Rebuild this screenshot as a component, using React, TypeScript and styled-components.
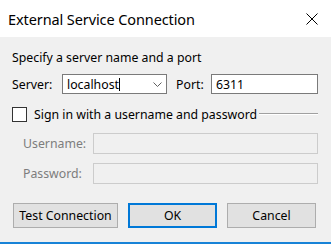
import React from "react";
import styled, { createGlobalStyle } from "styled-components";

const GlobalStyle = createGlobalStyle`
  html, body {
    margin: 0;
    padding: 0;
    background: #f0f0f0;
  }
  body {
    font-family: "Noto Sans", "Open Sans", sans-serif;
  }
`;

const Window = styled.div`
  width: 331px;
  height: 244px;
  display: flex;
  flex-direction: column;
  background: #f0f0f0;
  border-bottom: 2px solid #1883d7;
  box-sizing: border-box;
  overflow: hidden;
`;

const TitleBar = styled.div`
  height: 37px;
  flex: none;
  background: #fff;
  display: flex;
  align-items: center;
  justify-content: space-between;
  padding: 0 13px 0 8px;
`;

const Title = styled.span`
  font-size: 14.5px;
  color: #000;
  letter-spacing: -0.1px;
`;

const Body = styled.div`
  padding: 13px 13px 0 12px;
  display: flex;
  flex-direction: column;
  font-size: 12.3px;
  color: #000;
`;

const Heading = styled.div`
  height: 16px;
  line-height: 16px;
`;

const ServerRow = styled.div`
  margin-top: 8px;
  height: 20px;
  display: flex;
  align-items: center;
`;

const Label = styled.span<{ width?: number; disabled?: boolean; gap?: number }>`
  width: ${(p) => (p.width ? `${p.width}px` : "auto")};
  margin-left: ${(p) => p.gap ?? 0}px;
  flex: none;
  color: ${(p) => (p.disabled ? "#7d7d7d" : "#000")};
`;

const Combo = styled.div`
  width: 105px;
  height: 20px;
  box-sizing: border-box;
  border: 1px solid #7a7a7a;
  background: #fff;
  display: flex;
  align-items: center;
  padding: 0 4px 0 4px;
`;

const ComboText = styled.span`
  flex: 1;
  display: flex;
  align-items: center;
`;

const Caret = styled.span`
  width: 1px;
  height: 13px;
  background: #000;
`;

const TextBox = styled.div<{ width: number; disabled?: boolean }>`
  width: ${(p) => p.width}px;
  height: ${(p) => (p.disabled ? 21 : 20)}px;
  box-sizing: border-box;
  border: 1px solid ${(p) => (p.disabled ? "#cccccc" : "#7a7a7a")};
  background: ${(p) => (p.disabled ? "#f0f0f0" : "#fff")};
  display: flex;
  align-items: center;
  padding: 0 4px;
`;

const CheckRow = styled.div`
  margin-top: 12px;
  height: 16px;
  display: flex;
  align-items: center;
`;

const CheckBox = styled.span`
  width: 15px;
  height: 15px;
  box-sizing: border-box;
  border: 1px solid #333;
  background: #fff;
  flex: none;
  margin-right: 7px;
`;

const Rule = styled.span`
  flex: 1;
  height: 0;
  border-top: 1px solid #a0a0a0;
  border-bottom: 1px solid #fff;
  margin-left: 2px;
`;

const Credentials = styled.div`
  margin-top: 11px;
  display: grid;
  grid-template-columns: 70px 225px;
  row-gap: 9px;
  align-items: center;
  padding-left: 11px;
`;

const Buttons = styled.div`
  margin-top: 19px;
  display: flex;
  gap: 10px;
  padding-left: 1px;
`;

const Button = styled.div<{ width: number; primary?: boolean }>`
  width: ${(p) => p.width}px;
  height: 25px;
  box-sizing: border-box;
  border: ${(p) => (p.primary ? "2px solid #0078d7" : "1px solid #adadad")};
  background: #e1e1e1;
  display: flex;
  align-items: center;
  justify-content: center;
`;

export default function App() {
  return (
    <>
      <GlobalStyle />
      <Window>
        <TitleBar>
          <Title>External Service Connection</Title>
          <svg width="12" height="12" viewBox="0 0 12 12">
            <path d="M0.5 0.5L11.5 11.5M11.5 0.5L0.5 11.5" stroke="#000" strokeWidth="1" />
          </svg>
        </TitleBar>
        <Body>
          <Heading>Specify a server name and a port</Heading>
          <ServerRow>
            <Label width={50}>Server:</Label>
            <Combo>
              <ComboText>
                localhost
                <Caret />
              </ComboText>
              <svg width="9" height="5" viewBox="0 0 9 5">
                <path d="M0.5 0.5L4.5 4.5L8.5 0.5" fill="none" stroke="#606060" strokeWidth="1" />
              </svg>
            </Combo>
            <Label width={35} gap={9}>
              Port:
            </Label>
            <TextBox width={107}>6311</TextBox>
          </ServerRow>
          <CheckRow>
            <CheckBox />
            <span>Sign in with a username and password</span>
            <Rule />
          </CheckRow>
          <Credentials>
            <Label disabled>Username:</Label>
            <TextBox width={225} disabled />
            <Label disabled>Password:</Label>
            <TextBox width={225} disabled />
          </Credentials>
          <Buttons>
            <Button width={105}>Test Connection</Button>
            <Button width={89} primary>
              OK
            </Button>
            <Button width={89}>Cancel</Button>
          </Buttons>
        </Body>
      </Window>
    </>
  );
}
